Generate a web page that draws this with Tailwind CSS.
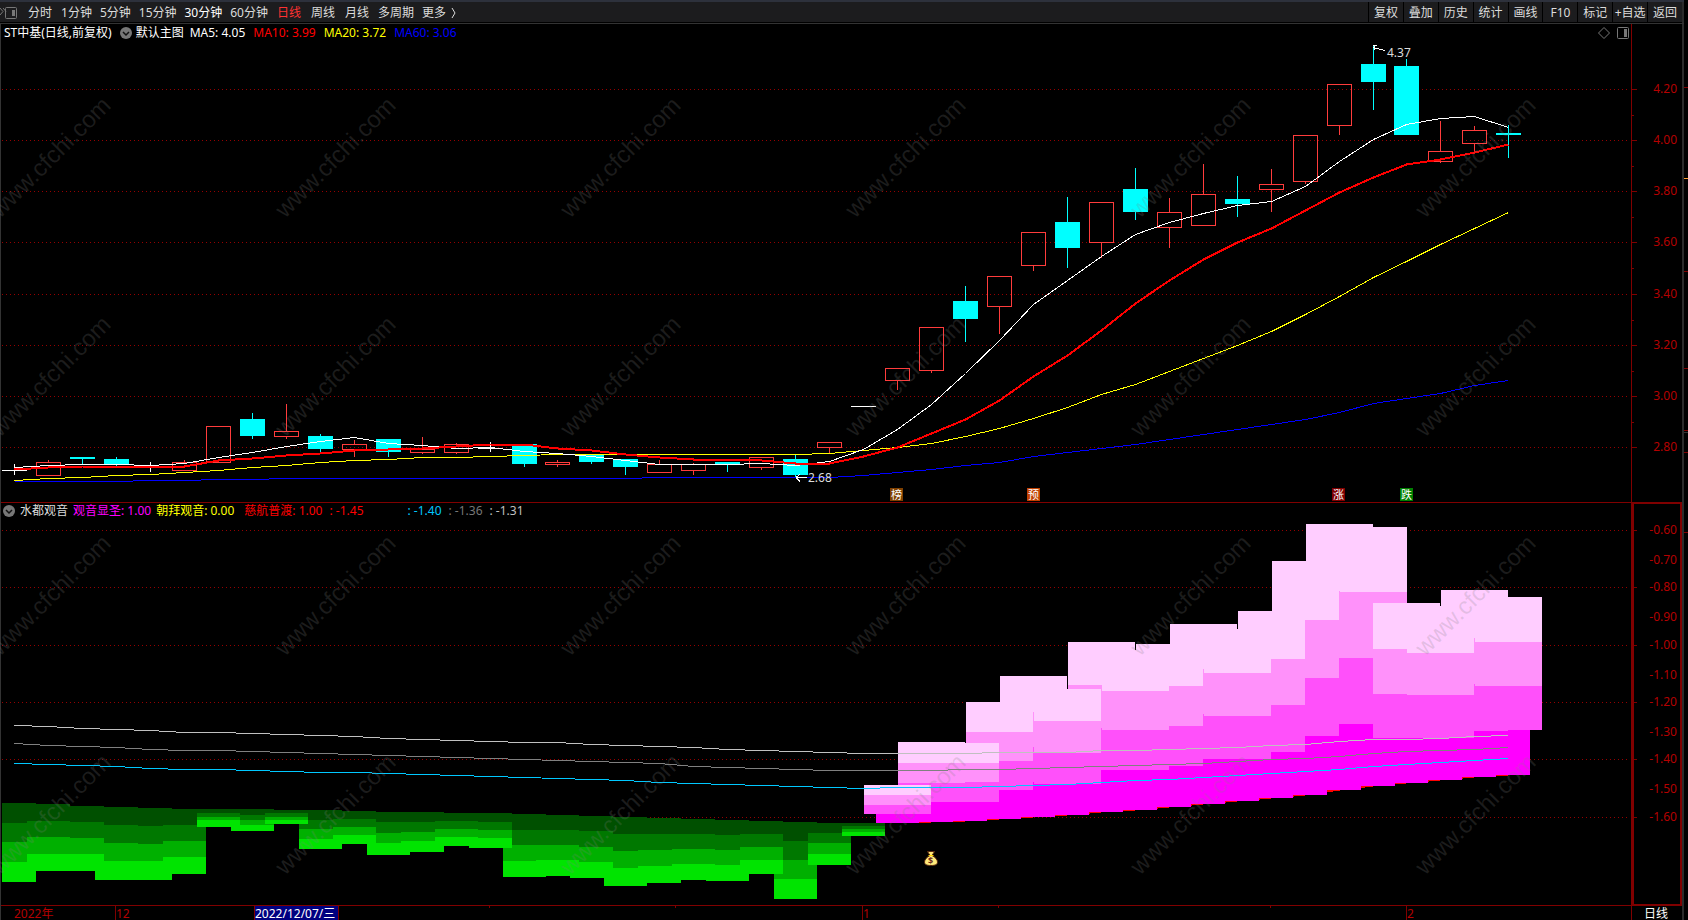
<!DOCTYPE html>
<html lang="zh-CN">
<head>
  <meta charset="UTF-8"/>
  <meta name="viewport" content="width=device-width,initial-scale=1"/>
  <title>ST中基 日线</title>
  <script src="https://cdn.jsdelivr.net/npm/@tailwindcss/browser@4"></script>
</head>
<body class="h-screen overflow-hidden bg-black text-white flex flex-col text-xs font-['Noto_Sans','Noto_Sans_CJK_SC',sans-serif]">

<!-- ──────────── 工具栏 ──────────── -->
<header class="h-6 shrink-0 flex bg-[#1c1c1e] border-t-2 border-t-[#2d313c] border-b border-b-[#333333] mr-1">
  <div class="flex-1 flex items-center text-[#dcdcdc] leading-5 pt-px border-b border-black">
    <svg class="w-[18px] h-3 shrink-0" viewBox="0 0 18 12" fill="none" stroke="#777777">
      <path d="M0 1l3 3.500L0 8M3 1l3 3.500"/>
      <rect x="5.500" y=".5" width="11" height="11" rx="1"/>
      <rect x="12" y="3" width="3" height="6" fill="#777777" stroke="none"/>
    </svg>
    <nav class="flex items-center gap-2 pl-[9px] whitespace-nowrap">
      <button class="px-px">分时</button>
      <button>1分钟</button>
      <button>5分钟</button>
      <button>15分钟</button>
      <button class="text-white">30分钟</button>
      <button>60分钟</button>
      <button class="px-px text-[#ff3232]">日线</button>
      <button class="px-px">周线</button>
      <button class="px-px">月线</button>
      <button>多周期</button>
      <button class="flex items-center gap-1">更多
        <svg class="w-2 h-3" viewBox="0 0 8 12" fill="none" stroke="currentColor"><path d="M2 1l3 5-3 5"/></svg>
      </button>
    </nav>
  </div>
  <div class="w-[316px] flex border-r-2 border-[#2b2b2b] text-[#dcdcdc] leading-5 whitespace-nowrap">
    <button class="flex-1 pt-px border-l border-b border-black">复权</button>
    <button class="flex-1 pt-px border-l border-b border-black">叠加</button>
    <button class="flex-1 pt-px border-l border-b border-black">历史</button>
    <button class="flex-1 pt-px border-l border-b border-black">统计</button>
    <button class="flex-1 pt-px border-l border-b border-black">画线</button>
    <button class="flex-1 pt-px border-l border-b border-black">F10</button>
    <button class="flex-1 pt-px border-l border-b border-black">标记</button>
    <button class="flex-1 pt-px border-l border-b border-black">+自选</button>
    <button class="flex-1 pt-px border-l border-b border-black">返回</button>
  </div>
</header>

<div class="flex-1 min-h-0 flex">
  <main class="flex-1 min-w-0 flex flex-col border-r-2 border-[#2b2b2b]">

    <!-- ──────────── 主图 ──────────── -->
    <section class="relative flex-[478] min-h-0">
      <svg id="main-chart" class="block w-full h-full" viewBox="0 24 1682 478"></svg>
      <div class="absolute top-0 left-1 flex items-center gap-2 leading-[18px] whitespace-nowrap">
        <span>ST中基(日线,前复权)</span>
        <div class="flex items-center gap-1">
          <button aria-label="选择主图">
            <svg class="w-3 h-3" viewBox="0 0 12 12"><circle cx="6" cy="6" r="6" fill="#777777"/><path d="M3 5l3 3 3-3" fill="none" stroke="#111111" stroke-width="1.500"/></svg>
          </button>
          <span>默认主图</span>
        </div>
        <span class="-ml-0.5">MA5: 4.05</span>
        <span class="text-[#ff0000]">MA10: 3.99</span>
        <span class="text-[#ffff00]">MA20: 3.72</span>
        <span class="text-[#0000ff]">MA60: 3.06</span>
      </div>
      <div class="absolute top-[3px] right-[53px] flex items-center gap-[7px]">
        <svg class="w-3 h-3" viewBox="0 0 12 12" fill="none" stroke="#777777"><path d="M6 .5L11.500 6 6 11.500 .5 6z"/></svg>
        <svg class="w-3 h-3" viewBox="0 0 12 12" fill="none" stroke="#777777"><rect x=".5" y=".5" width="11" height="11" rx="1"/><rect x="7" y="2" width="3" height="8" fill="#777777" stroke="none"/></svg>
      </div>
    </section>

    <!-- ──────────── 副图 + 日期轴 ──────────── -->
    <section class="relative flex-[418] min-h-0">
      <svg id="sub-chart" class="block w-full h-full" viewBox="0 502 1682 418"></svg>
      <div class="absolute top-0 left-[3px] flex items-center gap-[5px] leading-[18px] whitespace-nowrap">
        <button aria-label="选择指标">
          <svg class="w-3 h-3" viewBox="0 0 12 12"><circle cx="6" cy="6" r="6" fill="#777777"/><path d="M3 5l3 3 3-3" fill="none" stroke="#111111" stroke-width="1.500"/></svg>
        </button>
        <span class="text-[#dcdcdc]">水都观音</span>
        <span class="text-[#ff00ff]">观音显圣: 1.00</span>
        <span class="text-[#ffff00]">朝拜观音: 0.00</span>
        <div class="flex gap-[7px] pl-[5px]">
          <span class="text-[#ff0000]">慈航普渡: 1.00</span>
          <span class="text-[#ff0000]">: -1.45</span>
          <span class="text-[#00c8ff] pl-[37px]">: -1.40</span>
          <span class="text-[#777777]">: -1.36</span>
          <span class="text-[#c0c0c0]">: -1.31</span>
        </div>
      </div>
    </section>
  </main>

  <!-- 右侧相邻面板的边缘 -->
  <svg class="w-1 h-full shrink-0" viewBox="0 24 4 896" preserveAspectRatio="none" shape-rendering="crispEdges">
    <path d="M0 87.500h4M0 271.500h4M0 368.500h4M0 430.500h4M0 452.500h4M0 532.500h4" stroke="#800000"/>
    <path d="M0 178.500h4" stroke="#ffa030"/>
    <path d="M0 432.500h4" stroke="#333333"/>
  </svg>
</div>

<script>
const X0 = 14.6, STEP = 33.96;
const cx = i => Math.floor(X0 + STEP * i) + 0.5;

// [类型, 实体上沿, 实体下沿, 最高, 最低]; u 涨, d 跌, w 平
const candles = [
  ['w',470,470,464,475], ['u',462,475,460,475], ['d',457,459,457,465], ['d',459,465,457,466],
  ['w',467,467,462,472], ['u',462,470,460,470], ['u',426,462,426,462], ['d',419,436,413,439],
  ['u',431,436,404,439], ['d',436,449,434,452], ['u',444,449,440,457], ['d',439,452,439,457],
  ['u',449,452,437,454], ['u',444,452,443,454], ['w',448,448,442,452], ['d',444,464,444,467],
  ['u',462,464,460,467], ['d',455,462,455,464], ['d',459,467,459,475], ['u',464,472,460,472],
  ['u',464,470,463,475], ['d',462,464,462,472], ['u',457,467,457,470], ['d',459,475,455,478],
  ['u',442,447,442,453], ['w',406,406,406,406], ['u',368,380,368,390], ['u',327,370,327,373],
  ['d',301,319,286,342], ['u',276,306,276,334], ['u',232,265,232,271], ['d',222,248,197,268],
  ['u',202,242,202,258], ['d',189,212,168,220], ['u',212,227,198,248], ['u',194,225,164,225],
  ['d',199,204,176,217], ['u',184,189,169,212], ['u',135,181,135,184], ['u',84,125,84,135],
  ['d',64,82,46,110], ['d',66,135,59,135], ['u',151,161,121,163], ['u',130,143,126,151],
  ['d',133,135,125,158],
];

const ma5 = [467,465,464,464,465,463,457,452,446,441,437,443,445,448,447,451,453,456,460,464,464,464,463,465,461,
  449,429,404,373,340,304,280,256,234,222,213,205,201,186,161,139,124,118,116,127];
const ma10 = [469,467,466,466,466,466,460,458,455,453,450,449,448,446,444,444,448,450,454,457,459,459,460,463,463,
  456,447,433,419,400,376,355,330,303,280,259,242,228,210,192,177,164,159,152,144];
const ma20 = [480,478,477,475,474,472,470,467,465,462,460,459,457,457,456,455,454,454,454,454,454,454,454,454,453,
  450,447,443,436,428,418,407,394,384,371,358,345,331,314,296,277,261,244,228,212];
const ma60 = [481,481,481,481,480,480,479,479,478,478,478,478,478,478,478,478,478,478,478,477,477,477,477,477,477,
  475,472,469,465,462,456,452,448,444,439,434,429,424,419,412,403,398,393,385,380];

// 绿色柱各层边界 (自上而下), 第 0–25 根
const greens = [
  [803,823,842,862,882],[804,821,837,854,871],[806,822,838,854,871],[807,825,843,861,880],[808,826,844,861,880],
  [809,825,841,857,874],[809,813,817,820,827],[809,815,820,825,831],[810,813,817,820,824],[810,820,829,839,849],
  [811,819,827,835,844],[812,822,833,843,855],[812,822,832,841,852],[813,821,829,837,846],[813,822,830,838,848],
  [814,830,845,861,877],[815,830,845,860,876],[816,831,847,862,878],[817,834,851,868,886],[818,834,850,866,883],
  [819,834,849,864,880],[820,835,850,865,881],[821,834,847,860,874],[822,841,860,879,899],[823,833,843,854,865],
  [823,826,829,832,836],
];

// 粉色柱各层边界 (自上而下), 第 26–44 根
const pinks = [
  [785,795,805,814,823],[742,763,783,802,822],[743,763,782,802,821],[702,732,761,790,819],[676,712,747,782,817],
  [689,721,753,784,815],[642,685,728,770,812],[650,691,730,770,810],[644,686,726,766,807],[624,669,714,759,804],
  [629,673,716,759,801],[611,659,705,752,798],[561,620,678,736,795],[524,591,658,724,790],[527,592,657,722,786],
  [603,649,694,738,783],[606,653,695,738,780],[590,638,684,731,777],[597,642,686,730,775],
];

const lineLight = [725,726,728,729,730,732,732,733,734,735,736,738,739,740,741,742,742,744,745,746,747,749,750,751,752,
  753,753,753,753,752,752,752,750,750,749,748,747,745,744,741,739,739,738,736,735];
const lineGray = [743,745,746,747,749,750,750,751,752,753,754,755,756,757,758,759,760,761,762,763,766,767,768,769,770,
  770,770,770,769,769,768,767,766,765,764,763,761,759,758,756,753,751,750,749,747];
const lineBlue = [763,764,765,766,768,769,769,770,771,772,772,773,774,775,776,777,778,779,780,782,783,784,785,786,787,
  788,787,787,787,786,785,784,782,780,779,777,775,773,771,769,766,764,762,760,758];

const poly = (ys, color, width = 1, from = 0) =>
  `<polyline fill="none" stroke="${color}" stroke-width="${width}" points="${ys.map((y, k) => cx(k + from) + ',' + (y + 0.5)).join(' ')}"/>`;
const grid = y => `<path d="M2 ${y + 0.5}H1627" stroke="#960000" stroke-dasharray="1 3"/>`;
const tick = (y, w) => `<path d="M1632 ${y + 0.5}h${w}" stroke="#800000"/>`;
const label = (y, t) => `<text x="1677" y="${y + 4}" text-anchor="end" fill="#b40000">${t}</text>`;
const rect = (x, y, w, h, c) => `<rect x="${x}" y="${y}" width="${w}" height="${h}" fill="${c}"/>`;

function watermarks(rows) {
  let s = '';
  for (const y of rows)
    for (let k = 0; k < 6; k++)
      s += `<text transform="translate(${k * 285} ${y}) rotate(-45)" font-family="Liberation Sans, sans-serif" font-size="24" fill="#808080" fill-opacity=".22">www.cfchi.com</text>`;
  return s;
}

function candle([t, top, bot, hi, lo], i) {
  const x = cx(i), l = x - 12.5;
  if (t === 'w')
    return `<path d="M${l} ${top + 0.5}h25M${x} ${hi}V${lo}" stroke="#ffffff"/>`;
  if (t === 'd')
    return `<path d="M${x} ${hi}V${lo}" stroke="#00ffff"/>` + rect(l, top, 25, bot - top, '#00ffff');
  return `<path d="M${x} ${hi}V${top}M${x} ${bot}V${lo}" stroke="#ff3c3c"/>` +
    `<rect x="${l + 0.5}" y="${top + 0.5}" width="24" height="${bot - top}" fill="none" stroke="#ff3c3c"/>`;
}

function badge(x, char, color) {
  return rect(x, 488, 13, 13, color) +
    `<text x="${x + 1}" y="499" font-size="11" fill="#ffffff">${char}</text>`;
}

// ──────────── 主图 ────────────
function drawMain() {
  const ys = [89, 140, 191, 242, 294, 345, 396, 447];
  let s = '<g shape-rendering="crispEdges">';
  s += '<path d="M1631.500 24V502" stroke="#800000"/><path d="M.5 24V502" stroke="#333333"/>';
  s += ys.map(grid).join('') + ys.map(y => tick(y, 5)).join('');
  s += [115, 166, 217, 268, 320, 371, 422].map(y => tick(y, 2)).join('');
  s += candles.map(candle).join('');
  s += poly(ma60, '#0000ff') + poly(ma20, '#ffff00') + poly(ma5, '#ffffff') + poly(ma10, '#ff0000', 2);
  s += '<path d="M1373.500 47.500L1385 50.500M1373 45.500h4M1374.500 46v4M796 477.500h11M796 477.500l4-3M796 477.500l4 4" fill="none" stroke="#ffffff"/>';
  s += '</g><g font-size="12">';
  s += ys.map((y, k) => label(y, (4.2 - k * 0.2).toFixed(2))).join('');
  s += '<text x="1387" y="57" fill="#dcdcdc">4.37</text><text x="808" y="482" fill="#dcdcdc">2.68</text></g>';
  s += badge(890, '榜', '#804000') + badge(1027, '预', '#c04000') + badge(1332, '涨', '#800000') + badge(1400, '跌', '#008000');
  document.getElementById('main-chart').innerHTML = s + watermarks([219, 438]);
}

// ──────────── 副图 ────────────
function drawSub() {
  const ys = [530, 587, 645, 702, 759, 817];
  let s = '<g shape-rendering="crispEdges">' + ys.map(grid).join('');
  ['#005000', '#007800', '#00b000', '#00e400'].forEach((c, b) =>
    greens.forEach((g, i) => {
      const l = Math.max(2, cx(i) - 21.5);
      s += rect(l, g[b], cx(i) + 21.5 - l, g[b + 1] - g[b], c);
    }));
  s += poly(pinks.map(p => p[4] - 1), '#ff0000', 2, 26);
  ['#ff00ff', '#ff50fa', '#ff91fa', '#ffcdff'].forEach((c, k) => {
    const b = 3 - k, half = b === 3 ? 21.5 : 33.5;
    pinks.forEach((p, j) => s += rect(cx(j + 26) - half, p[b], half * 2, p[b + 1] - p[b], c));
  });
  s += poly(lineLight, '#c0c0c0') + poly(lineGray, '#808080') + poly(lineBlue, '#00c8ff');

  // 边框和坐标轴
  s += '<path d="M1 502.500H1682M1 905.500H1682M1631.500 502V920" stroke="#800000"/>';
  s += '<rect x="1633" y="503" width="48" height="402" fill="none" stroke="#800000" stroke-width="2"/>';
  s += '<path d="M.5 502V920" stroke="#333333"/>';
  s += ys.map(y => tick(y, 5)).join('') + [559, 616, 674, 731, 788].map(y => tick(y, 2)).join('');
  s += rect(254, 906, 84, 14, '#000080');
  s += '<path d="M115.500 905v15M254.500 905v15M338.500 905v15M862.500 905v15M1406.500 905v15M489.500 905v3M675.500 905v3M998.500 905v3M1270.500 905v3" stroke="#800000"/>';
  s += '</g><g font-size="12">';
  [530, 560, 587, 617, 645, 675, 702, 732, 759, 789, 817].forEach((y, k) => s += label(y, (-0.6 - k * 0.1).toFixed(2)));
  s += '<g fill="#b40000"><text x="14" y="918">2022年</text><text x="116" y="918">12</text><text x="863" y="918">1</text><text x="1407" y="918">2</text></g>';
  s += '<g fill="#ffffff"><text x="255" y="918">2022/12/07/三</text><text x="1644" y="918">日线</text></g></g>';

  // 钱袋
  s += '<g stroke="#5a2a10"><path d="M927.500 851.500h7l-2.500 4c3 1.500 5.500 4 5.500 6.500 0 2.500-2 3.500-6.500 3.500s-6.500-1-6.500-3.500c0-2.500 2.500-5 5.500-6.500z" fill="#ffe97a"/><path d="M928.500 855.500h5" stroke="#ffd800"/></g>';
  s += '<text x="928" y="864" font-size="9" font-weight="bold" fill="#6a2a20">$</text>';
  document.getElementById('sub-chart').innerHTML = s + watermarks([657, 876]);
}

drawMain();
drawSub();
</script>
</body>
</html>
